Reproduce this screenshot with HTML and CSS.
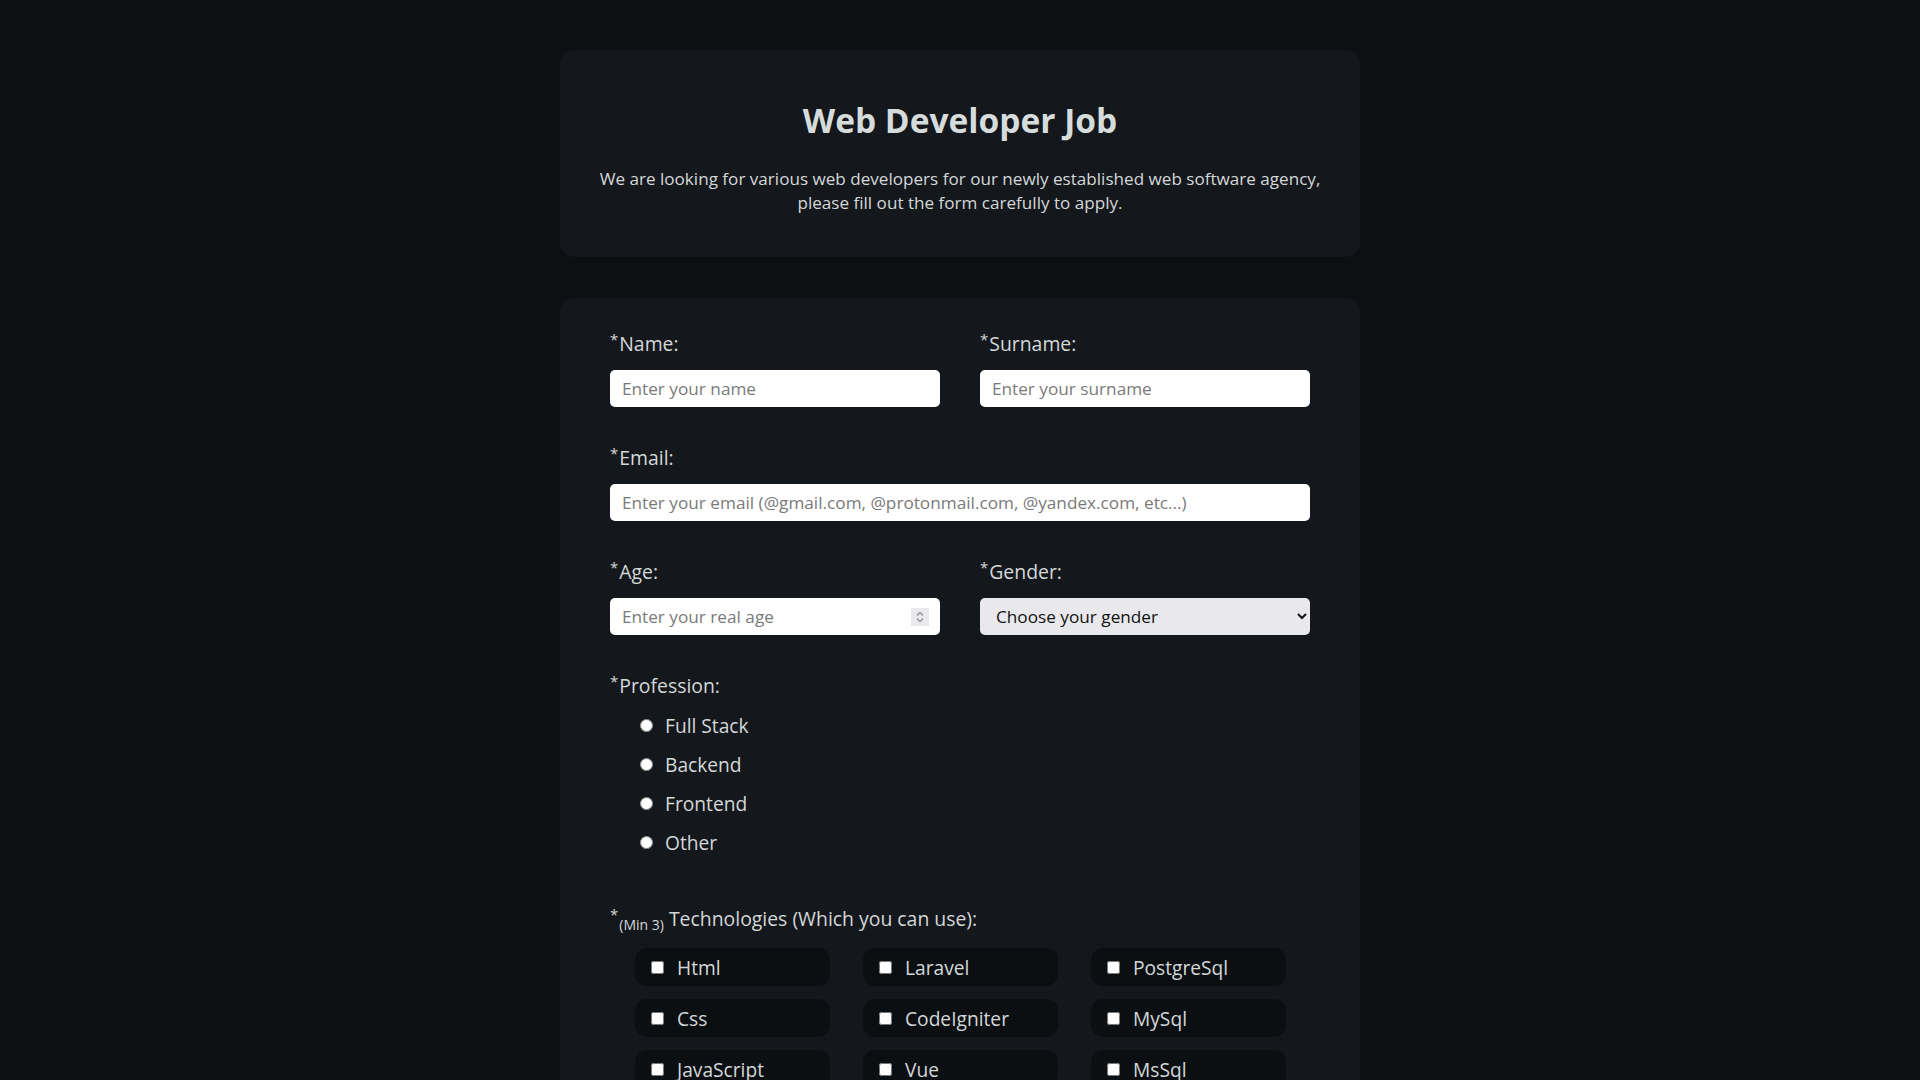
FILE: index.html
```html
<!DOCTYPE html>
<html lang="en">
<head>
<meta charset="UTF-8">
<title>Web Developer Job</title>
<link rel="stylesheet" href="styles.css">
</head>
<body>
<main class="wrap">
  <section class="card intro">
    <h1 class="title">Web Developer Job</h1>
    <p class="lead">We are looking for various web developers for our newly established web software agency, please fill out the form carefully to apply.</p>
  </section>

  <form class="card form">
    <div class="row two">
      <div class="field">
        <label class="lbl"><sup class="req">*</sup>Name:</label>
        <input class="inp" type="text" placeholder="Enter your name">
      </div>
      <div class="field">
        <label class="lbl"><sup class="req">*</sup>Surname:</label>
        <input class="inp" type="text" placeholder="Enter your surname">
      </div>
    </div>

    <div class="row">
      <div class="field">
        <label class="lbl"><sup class="req">*</sup>Email:</label>
        <input class="inp" type="email" placeholder="Enter your email (@gmail.com, @protonmail.com, @yandex.com, etc...)">
      </div>
    </div>

    <div class="row two">
      <div class="field">
        <label class="lbl"><sup class="req">*</sup>Age:</label>
        <div class="num-wrap">
          <input class="inp num" type="number" placeholder="Enter your real age">
          <span class="spin" aria-hidden="true">
            <svg width="10" height="14" viewBox="0 0 10 14"><path d="M2 5.5 L5 2.5 L8 5.5" fill="none" stroke="#8a8a92" stroke-width="1.2"/><path d="M2 8.5 L5 11.5 L8 8.5" fill="none" stroke="#8a8a92" stroke-width="1.2"/></svg>
          </span>
        </div>
      </div>
      <div class="field">
        <label class="lbl"><sup class="req">*</sup>Gender:</label>
        <select class="sel">
          <option>Choose your gender</option>
          <option>Male</option>
          <option>Female</option>
        </select>
      </div>
    </div>

    <div class="row">
      <div class="field">
        <span class="lbl"><sup class="req">*</sup>Profession:</span>
        <div class="radios">
          <label class="radio"><input type="radio" name="prof"><span>Full Stack</span></label>
          <label class="radio"><input type="radio" name="prof"><span>Backend</span></label>
          <label class="radio"><input type="radio" name="prof"><span>Frontend</span></label>
          <label class="radio"><input type="radio" name="prof"><span>Other</span></label>
        </div>
      </div>
    </div>

    <div class="row tech-row">
      <div class="field">
        <span class="lbl"><sup class="req">*</sup><sub class="min">(Min 3)</sub> Technologies (Which you can use):</span>
        <div class="techs">
          <label class="tech"><input type="checkbox"><span>Html</span></label>
          <label class="tech"><input type="checkbox"><span>Laravel</span></label>
          <label class="tech"><input type="checkbox"><span>PostgreSql</span></label>
          <label class="tech"><input type="checkbox"><span>Css</span></label>
          <label class="tech"><input type="checkbox"><span>CodeIgniter</span></label>
          <label class="tech"><input type="checkbox"><span>MySql</span></label>
          <label class="tech"><input type="checkbox"><span>JavaScript</span></label>
          <label class="tech"><input type="checkbox"><span>Vue</span></label>
          <label class="tech"><input type="checkbox"><span>MsSql</span></label>
        </div>
      </div>
    </div>
  </form>
</main>
</body>
</html>
```

FILE: styles.css
```css
* { box-sizing: border-box; }

html, body {
  margin: 0;
  padding: 0;
}

body {
  background: #0d1013;
  color: #d3d8d9;
  font-family: "Open Sans", "Liberation Sans", sans-serif;
}

.wrap {
  width: 800px;
  margin: 0 auto;
  padding: 50px 0 60px;
  display: flex;
  flex-direction: column;
  gap: 41px;
}

.card {
  background: #14171b;
  border-radius: 14px;
}

.intro {
  padding: 48px 38px 42px;
  text-align: center;
}

.title {
  margin: 0;
  font-size: 33.5px;
  line-height: 44px;
  font-weight: 700;
  color: #d6dcdc;
}

.lead {
  margin: 25px 0 0;
  font-size: 17.1px;
  line-height: 24px;
  color: #d3d8d9;
}

.form {
  padding: 32px 50px 60px;
  display: flex;
  flex-direction: column;
  gap: 37px;
}

.row.two {
  display: grid;
  grid-template-columns: 330px 330px;
  column-gap: 40px;
}

.field {
  display: flex;
  flex-direction: column;
}

.lbl {
  font-size: 19.4px;
  line-height: 27px;
  margin-bottom: 13px;
  color: #d3d8d9;
}

.req {
  font-size: 15px;
  line-height: 0;
  vertical-align: 6px;
  margin-right: 1px;
}

.min {
  font-size: 14px;
  line-height: 0;
  vertical-align: -4px;
}

.num-wrap {
  position: relative;
  display: flex;
  flex-direction: column;
}

.inp {
  height: 37px;
  border: none;
  border-radius: 5px;
  background: #ffffff;
  padding: 0 12px;
  font-family: inherit;
  font-size: 17.2px;
  color: #222;
  outline: none;
}

.inp::placeholder {
  color: #7a7a7a;
}

.num {
  -moz-appearance: textfield;
  appearance: textfield;
}

.num::-webkit-inner-spin-button,
.num::-webkit-outer-spin-button {
  -webkit-appearance: none;
  margin: 0;
}

.spin {
  position: absolute;
  right: 11px;
  top: 10px;
  width: 18px;
  height: 18px;
  background: #e9e9ed;
  display: flex;
  align-items: center;
  justify-content: center;
  pointer-events: none;
}

.sel {
  height: 37px;
  border: none;
  border-radius: 5px;
  background-color: #e9e9ed;
  padding: 0 8px 0 12px;
  font-family: inherit;
  font-size: 17.2px;
  color: #111;
}

.radios {
  display: flex;
  flex-direction: column;
  gap: 12px;
  padding-left: 25px;
}

.radio {
  display: flex;
  align-items: center;
  gap: 12px;
  font-size: 19.2px;
  line-height: 27px;
}

.radio input {
  margin: 0 0 0 5px;
  width: 13px;
  height: 13px;
}

.tech-row {
  margin-top: 12px;
}

.tech-row .lbl {
  margin-bottom: 16px;
}

.techs {
  display: grid;
  grid-template-columns: repeat(3, 195px);
  column-gap: 33px;
  row-gap: 13px;
  margin-left: 25px;
}

.tech {
  height: 38px;
  background: #0c0f12;
  border-radius: 12px;
  display: flex;
  align-items: center;
  padding-left: 16px;
  gap: 13px;
  font-size: 19.2px;
}

.tech input {
  margin: 0;
  width: 13px;
  height: 13px;
}
```
